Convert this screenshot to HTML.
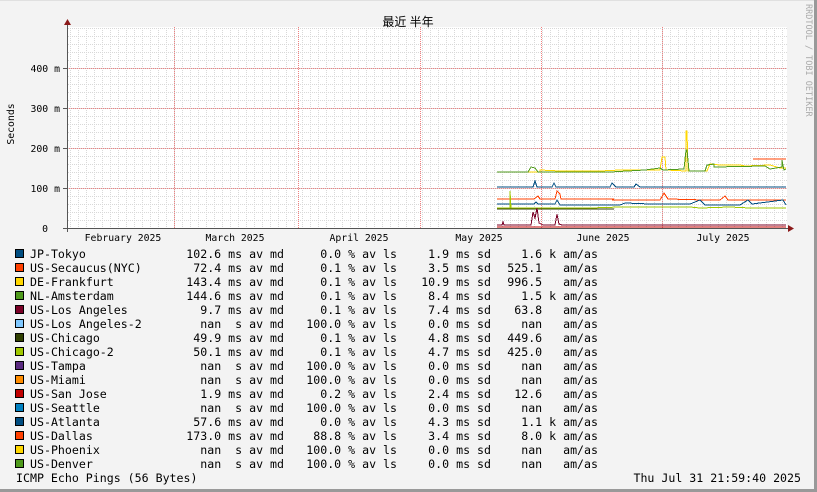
<!DOCTYPE html>
<html><head><meta charset="utf-8"><style>
html,body{margin:0;padding:0;background:#f3f3f3}
svg{display:block}
text{font-family:"DejaVu Sans Mono","Liberation Mono",monospace;font-size:11.6px;fill:#000;white-space:pre}
.ax{font-size:9.8px}
</style></head><body>
<svg width="817" height="492" xmlns="http://www.w3.org/2000/svg">
<defs>
<pattern id="hg" x="0" y="4" width="8" height="8" patternUnits="userSpaceOnUse">
<line x1="0" y1="0.5" x2="8" y2="0.5" stroke="#d8d8d8" stroke-dasharray="1 1"/>
</pattern>
<pattern id="vg" x="70" y="0" width="8" height="8" patternUnits="userSpaceOnUse">
<line x1="0.5" y1="0" x2="0.5" y2="8" stroke="#d8d8d8" stroke-dasharray="1 1"/>
</pattern>
</defs>
<rect x="0" y="0" width="817" height="492" fill="#f3f3f3"/>
<rect x="0" y="0" width="817" height="1" fill="#e0e0e0"/>
<rect x="814" y="0" width="3" height="492" fill="#999"/>
<rect x="0" y="489" width="817" height="3" fill="#999"/>
<rect x="67" y="27" width="720" height="201" fill="#fff"/>
<rect x="67" y="28" width="720" height="200" fill="url(#hg)"/>
<rect x="67" y="28" width="720" height="200" fill="url(#vg)"/>
<g stroke="#f08080" stroke-dasharray="1 1" shape-rendering="crispEdges">
<line x1="67" y1="68.5" x2="787" y2="68.5"/>
<line x1="67" y1="108.5" x2="787" y2="108.5"/>
<line x1="67" y1="148.5" x2="787" y2="148.5"/>
<line x1="67" y1="188.5" x2="787" y2="188.5"/>
<line x1="174.5" y1="27" x2="174.5" y2="228"/>
<line x1="298.5" y1="27" x2="298.5" y2="228"/>
<line x1="420.5" y1="27" x2="420.5" y2="228"/>
<line x1="541.5" y1="27" x2="541.5" y2="228"/>
<line x1="662.5" y1="27" x2="662.5" y2="228"/>
</g>
<g fill="none" stroke-width="1" shape-rendering="crispEdges">
<polyline stroke="#ffd700" points="497,172 540,172 540,170 560,171 600,171 620,170 660,170 662,157 665,157 666,170 686,171 686,131 687,131 688,171 707,171 710,164 720,165 740,165 745,166 770,165 780,168 786,168"/>
<polyline stroke="#4f9a1c" points="497,172 528,172 531,167 535,168 538,172 610,172 645,170 660,168 663,170 684,169 686,150 687,150 689,171 705,171 707,165 714,164 714,167 765,166 770,169 782,167 782,160 784,170 786,169"/>
<polyline stroke="#ff4000" points="753,159 786,159"/>
<polyline stroke="#ff4000" points="497,199 534,199 538,196 540,199 555,199 557,191 560,194 561,199 614,199 612,200 660,200 664,193 668,199 705,200 720,200 725,196 728,200 786,200"/>
<polyline stroke="#004d80" points="497,187 533,187 535,181 537,187 552,187 554,183 556,187 610,187 612,183 616,187 634,187 636,184 640,187 786,187"/>
<polyline stroke="#004d80" points="497,204 534,204 536,202 538,204 555,204 557,200 560,205 620,205 625,203 650,204 690,204 700,200 705,205 740,205 748,200 752,204 783,200 786,205"/>
<polyline stroke="#a0c800" points="497,208 510,208 510,191 511,208 590,208 620,207 650,207 690,207 700,208 730,207 750,208 786,208"/>
<polyline stroke="#2f3f00" points="497,209 614,209"/>
<polyline stroke="#7a0026" points="497,225 502,225 503,222 504,225 531,225 533,212 535,218 537,208 539,223 543,225 555,225 557,214 559,224 562,225 786,225"/>
<polyline stroke="#c00000" points="497,227 786,227"/>
</g>
<line x1="67.5" y1="24" x2="67.5" y2="232" stroke="#555"/>
<line x1="63" y1="228.5" x2="790" y2="228.5" stroke="#555"/>
<polygon points="64,25 71,25 67.5,19" fill="#8b1a1a"/>
<polygon points="788,225 788,232 794,228.5" fill="#8b1a1a"/>
<g stroke="#555"><line x1="63" y1="68.5" x2="67" y2="68.5"/><line x1="63" y1="108.5" x2="67" y2="108.5"/><line x1="63" y1="148.5" x2="67" y2="148.5"/><line x1="63" y1="188.5" x2="67" y2="188.5"/></g>
<g text-anchor="end" class="ax">
<text class="ax" x="60" y="72">400 m</text><text class="ax" x="60" y="112">300 m</text><text class="ax" x="60" y="152">200 m</text><text class="ax" x="60" y="192">100 m</text><text class="ax" x="48" y="232">0</text>
</g>
<text class="ax" x="14" y="124" text-anchor="middle" transform="rotate(-90 14 124)">Seconds</text>
<text x="408" y="26" text-anchor="middle" style="font-family:'Liberation Sans','Noto Sans CJK SC',sans-serif;font-size:12px">最近 半年</text>
<text x="806" y="4" transform="rotate(90 806 4)" style="font-size:8.5px;fill:#aaa">RRDTOOL / TOBI OETIKER</text>
<g text-anchor="middle">
<text class="ax" x="123" y="241">February 2025</text><text class="ax" x="235" y="241">March 2025</text><text class="ax" x="359" y="241">April 2025</text><text class="ax" x="479" y="241">May 2025</text><text class="ax" x="603" y="241">June 2025</text><text class="ax" x="723" y="241">July 2025</text>
</g>
<g stroke="#000" stroke-width="1">
<rect x="15.5" y="249.5" width="8" height="8" fill="#004d80"/>
<rect x="15.5" y="263.5" width="8" height="8" fill="#ff4000"/>
<rect x="15.5" y="277.5" width="8" height="8" fill="#ffd700"/>
<rect x="15.5" y="291.5" width="8" height="8" fill="#4f9a1c"/>
<rect x="15.5" y="305.5" width="8" height="8" fill="#7a0026"/>
<rect x="15.5" y="319.5" width="8" height="8" fill="#80c8ff"/>
<rect x="15.5" y="333.5" width="8" height="8" fill="#2f3f00"/>
<rect x="15.5" y="347.5" width="8" height="8" fill="#a0c800"/>
<rect x="15.5" y="361.5" width="8" height="8" fill="#5a2a80"/>
<rect x="15.5" y="375.5" width="8" height="8" fill="#ff8c00"/>
<rect x="15.5" y="389.5" width="8" height="8" fill="#c00000"/>
<rect x="15.5" y="403.5" width="8" height="8" fill="#0080c0"/>
<rect x="15.5" y="417.5" width="8" height="8" fill="#004d80"/>
<rect x="15.5" y="431.5" width="8" height="8" fill="#ff4000"/>
<rect x="15.5" y="445.5" width="8" height="8" fill="#ffd700"/>
<rect x="15.5" y="459.5" width="8" height="8" fill="#4f9a1c"/>
</g>
<g>
<text x="30" y="258">JP-Tokyo</text><text x="30" y="272">US-Secaucus(NYC)</text><text x="30" y="286">DE-Frankfurt</text><text x="30" y="300">NL-Amsterdam</text><text x="30" y="314">US-Los Angeles</text><text x="30" y="328">US-Los Angeles-2</text><text x="30" y="342">US-Chicago</text><text x="30" y="356">US-Chicago-2</text><text x="30" y="370">US-Tampa</text><text x="30" y="384">US-Miami</text><text x="30" y="398">US-San Jose</text><text x="30" y="412">US-Seattle</text><text x="30" y="426">US-Atlanta</text><text x="30" y="440">US-Dallas</text><text x="30" y="454">US-Phoenix</text><text x="30" y="468">US-Denver</text>
</g>
<g text-anchor="end">
<text x="284" y="258">102.6 ms av md</text><text x="397" y="258">0.0 % av ls</text><text x="491" y="258">1.9 ms sd</text><text x="598" y="258">1.6 k am/as</text>
<text x="284" y="272">72.4 ms av md</text><text x="397" y="272">0.1 % av ls</text><text x="491" y="272">3.5 ms sd</text><text x="598" y="272">525.1   am/as</text>
<text x="284" y="286">143.4 ms av md</text><text x="397" y="286">0.1 % av ls</text><text x="491" y="286">10.9 ms sd</text><text x="598" y="286">996.5   am/as</text>
<text x="284" y="300">144.6 ms av md</text><text x="397" y="300">0.1 % av ls</text><text x="491" y="300">8.4 ms sd</text><text x="598" y="300">1.5 k am/as</text>
<text x="284" y="314">9.7 ms av md</text><text x="397" y="314">0.1 % av ls</text><text x="491" y="314">7.4 ms sd</text><text x="598" y="314">63.8   am/as</text>
<text x="284" y="328">nan  s av md</text><text x="397" y="328">100.0 % av ls</text><text x="491" y="328">0.0 ms sd</text><text x="598" y="328">nan   am/as</text>
<text x="284" y="342">49.9 ms av md</text><text x="397" y="342">0.1 % av ls</text><text x="491" y="342">4.8 ms sd</text><text x="598" y="342">449.6   am/as</text>
<text x="284" y="356">50.1 ms av md</text><text x="397" y="356">0.1 % av ls</text><text x="491" y="356">4.7 ms sd</text><text x="598" y="356">425.0   am/as</text>
<text x="284" y="370">nan  s av md</text><text x="397" y="370">100.0 % av ls</text><text x="491" y="370">0.0 ms sd</text><text x="598" y="370">nan   am/as</text>
<text x="284" y="384">nan  s av md</text><text x="397" y="384">100.0 % av ls</text><text x="491" y="384">0.0 ms sd</text><text x="598" y="384">nan   am/as</text>
<text x="284" y="398">1.9 ms av md</text><text x="397" y="398">0.2 % av ls</text><text x="491" y="398">2.4 ms sd</text><text x="598" y="398">12.6   am/as</text>
<text x="284" y="412">nan  s av md</text><text x="397" y="412">100.0 % av ls</text><text x="491" y="412">0.0 ms sd</text><text x="598" y="412">nan   am/as</text>
<text x="284" y="426">57.6 ms av md</text><text x="397" y="426">0.0 % av ls</text><text x="491" y="426">4.3 ms sd</text><text x="598" y="426">1.1 k am/as</text>
<text x="284" y="440">173.0 ms av md</text><text x="397" y="440">88.8 % av ls</text><text x="491" y="440">3.4 ms sd</text><text x="598" y="440">8.0 k am/as</text>
<text x="284" y="454">nan  s av md</text><text x="397" y="454">100.0 % av ls</text><text x="491" y="454">0.0 ms sd</text><text x="598" y="454">nan   am/as</text>
<text x="284" y="468">nan  s av md</text><text x="397" y="468">100.0 % av ls</text><text x="491" y="468">0.0 ms sd</text><text x="598" y="468">nan   am/as</text>
</g>
<text x="16" y="482">ICMP Echo Pings (56 Bytes)</text>
<text x="801" y="482" text-anchor="end">Thu Jul 31 21:59:40 2025</text>
</svg>
</body></html>
